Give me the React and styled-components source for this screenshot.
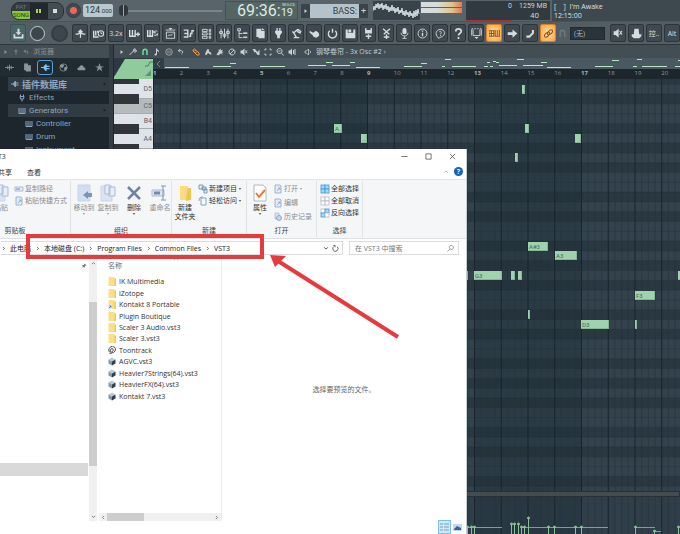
import React from "react";
import styled, { createGlobalStyle, css } from "styled-components";

const GlobalStyle = createGlobalStyle`
	* {
		box-sizing: border-box;
	}
	body {
		margin: 0;
		background: #2f3d46;
		font-family: "Open Sans", "Noto Sans CJK SC", sans-serif;
		font-size: 7px;
	}
	button, input, select {
		font: inherit;
		color: inherit;
		margin: 0;
		padding: 0;
		border: 0;
		background: none;
		appearance: none;
		outline: none;
	}
	a {
		color: inherit;
		text-decoration: none;
	}
	svg {
		display: block;
		flex: none;
	}
`;

//.... Icons, all drawn in a 16 x 16 box
const solid = { fill: "currentColor", stroke: "none" };
const ICONS = {
	download: (
		<>
			<path {...solid} d="M6.5 1h3v5H12L8 10.5 4 6h2.5z" />
			<path d="M2 9v5h12V9" strokeWidth="2.5" />
		</>
	),
	tee: <path d="M1 9c4 0 6-1 7-4 1 3 3 4 7 4M8 3v11M5 6l3-3 3 3" strokeWidth="1.8" />,
	keysClock: (
		<>
			<path d="M1 4v9h7M4 4v7M7 4v3" strokeWidth="2" />
			<circle cx="11.5" cy="8" r="4" strokeWidth="1.6" />
			<path d="M11.5 5.5V8h2" />
		</>
	),
	keysPlus: <path d="M1 3v9h8V3M5 3v8M10 9h6M13 6v6" strokeWidth="2" />,
	keysLoop: (
		<>
			<path d="M1 3v9h7V3M4.5 3v8" strokeWidth="2" />
			<path d="M10 10a3 3 0 0 0 5-2M15 5a3 3 0 0 0-5 2M10 4v3h3M15 11V8" strokeWidth="1.4" />
		</>
	),
	panel: (
		<>
			<path d="M1 3h14M2 6h12v9H2zM4 12c2-4 4 1 8-4" />
			<path {...solid} d="M5 0h6L8 3z" />
		</>
	),
	steps: <path d="M1 3h6v10H1M2 8h5M9 12h2V8h2V4h3" strokeWidth="2" />,
	racks: <path d="M2 2h7v3H2zM2 7h7v3H2zM2 12h7v3H2zM12 2h2v3h-2zM12 7h2v3h-2zM12 12h2v3h-2z" />,
	mixer: <path d="M3 1v14M8 1v14M13 1v14M1 5h4v3H1zM6 9h4v3H6zM11 5h4v3h-4z" />,
	tree: <path d="M1 1h4v3H1zM3 4v10h5M3 8h5M9 8h6M9 7h6M9 13h6M9 14h6" />,
	file: <path {...solid} d="M2 1h7v3h5v11H5v-2H2zM10 0l4 3h-4z" />,
	plug: <path {...solid} d="M3 4h2V0h2v4h2V0h2v4h2v3l-3 4v4H6v-4L3 7z" />,
	robot: <path d="M10 2L4 7l4 7M4 7L2 5M10 2l4 3-1 3M4 14h8M9 5l4 2" strokeWidth="2" />,
	hand: <path {...solid} d="M1 4l5 3 4-3 4 3 1 4-4 3-4-1-2-3-4-3z" />,
	power: <path d="M8 1v6M4 4a6 6 0 1 0 8 0" strokeWidth="2" />,
	save: <path {...solid} d="M1 2h3v5h8V2h3v13H1zM5 2h4v4H5z" />,
	savePlus: (
		<>
			<path {...solid} d="M3 0h2v3h6V0h2v8H3z" />
			<path d="M8 9v7M4 12h8" strokeWidth="2" />
		</>
	),
	cut: <path d="M3 1l9 8M13 1L4 9M8 9v7M4 13h8" strokeWidth="2" />,
	mic: (
		<>
			<rect {...solid} x="5" y="0" width="6" height="9" rx="3" />
			<path d="M3 7c0 6 10 6 10 0M8 12v3M5 15h6" />
		</>
	),
	info: (
		<>
			<circle cx="8" cy="8" r="6.5" />
			<path d="M8 7v5M8 3.5v2" strokeWidth="2" />
		</>
	),
	chat: (
		<>
			<path d="M4 13c-4-3-3-11 4-11s8 9 1 11l-4 2z" />
			<path d="M6 6c1-2 4-1 3 1l-1 2M8 10v1.5" />
		</>
	),
	help: <path d="M4 5c0-5 8-5 8 0 0 3-4 2-4 6M8 13v3" strokeWidth="2.5" />,
	frame: (
		<>
			<path d="M1 1h2M5 1h2M9 1h2M13 1h2M3 2v9h10V2M1 11V2M15 11V2" />
			<path {...solid} d="M5 13h6l-3 3z" />
		</>
	),
	keyboard: (
		<path d="M0 4h7v8H0zM0 8h7M3.5 4v8M9 3v9h6V3M12 3v8" strokeWidth="1.5" />
	),
	arrow: <path {...solid} d="M1 6h7V2l7 6-7 6v-4H1z" />,
	slide: <path {...solid} d="M2 11h4l4-4V3h3v5l-4 4-2 2H2z" />,
	link: (
		<path
			d="M7 10c-2-2 3-9 6-7s-2 7-4 6M9 6c2 2-3 9-6 7s2-7 4-6"
			strokeWidth="1.6"
		/>
	),
	magnet: <path d="M4 14V7c0-6 8-6 8 0v7" strokeWidth="3" />,
	mute: <path {...solid} d="M1 5h3l5-4v14l-5-4H1zM10 5l1-1 4 6-1 1zM14 4l1 1-4 6-1-1z" />,
	hat: <path {...solid} d="M5 1h6l1 8h3v3l-3 3H4l-3-3V9h3z" />,
	play: <path {...solid} d="M4 3l7 5-7 5z" />,
	wrench: <path d="M1 14l8-8M9 6c-1-4 2-5 4-4l-2 2 1 2 3-1c0 4-4 4-6 2" strokeWidth="2" />,
	note: <path {...solid} d="M6 1h2c0 3 4 3 4 6l-1 2c0-2-2-3-3-3v6c0 4-6 4-5 1 0-1 1-2 3-2z" />,
	circleNote: (
		<>
			<circle cx="8" cy="8" r="6.5" />
			<path d="M6 5v6M10 5v6" />
		</>
	),
	undo: <path d="M3 6h7c4 0 4 6 0 8M7 2L3 6l4 4" strokeWidth="2" />,
	up: <path d="M8 15V3M4 7l4-5 4 5" strokeWidth="2" />,
	pencil: <path d="M2 4l3-2 9 8v4h-4L2 6zM4 7l3-3M7 10l3-3" strokeWidth="2" />,
	brush: <path {...solid} d="M2 12l4-9 3-1 2 6 3 1 1 5-4-2-3-2-4 5z" />,
	spray: <path {...solid} d="M1 13l5-7-2-3 3 1 2-3 1 4 4-2-2 4 3 2-4 1 3 4-5-3-4 4z" />,
	ban: <path d="M8 2a6 6 0 1 0 .1 0M4 12l8-8" strokeWidth="2" />,
	slice: <path {...solid} d="M1 2h5l5 6 4-5v11h-4L7 8 5 9z" />,
	select: <path d="M5 2H2v3M11 2h3v3M5 14H2v-3M11 14h3v-3" strokeWidth="2" />,
	zoom: <path d="M7 1a5 5 0 1 0 .1 0M11 10l4 5M5 6h4" strokeWidth="2" />,
	speaker: <path {...solid} d="M1 5h3l4-4v14l-4-4H1zM10 4h2v8h-2zM13 2h2v12h-2z" />,
	speakerLine: <path d="M2 6h3l4-4v12l-4-4H2zM11 5l3 3-3 3" strokeWidth="1.5" />,
	wave: <path d="M0 8h16M5 5v6M8 3v10M11 5v6" strokeWidth="1.5" />,
	docs: <path {...solid} d="M2 1h7v3h5v11H5v-2H2z" />,
	plugLeft: <path {...solid} d="M0 7h4l4-5h2v3h5v2h-5v2h5v2h-5v3H8L4 9H0z" />,
	globe: (
		<>
			<circle cx="8" cy="8" r="6.5" />
			<path {...solid} d="M3 3l5-1 1 3-3 4-4-2zM10 7l4-1v4l-4 4-1-4z" />
		</>
	),
	cloud: <path {...solid} d="M2 13c-3-3 0-6 2-5 1-6 8-5 8 0 3 0 4 3 2 5z" />,
	star: <path {...solid} d="M8 0l2 6h6l-5 3 2 6-5-4-5 4 2-6-5-3h6z" />,
	effect: <path d="M5 1v3M11 1v3M4 5h8l-1 5H5zM8 10v5" strokeWidth="2" />,
	keys: <path d="M2 2v11h12V2M6 2v10M10 2v10" strokeWidth="2" />,
	caretUp: <path d="M3 10l5-5 5 5" strokeWidth="2" />,
	caretDown: <path d="M3 6l5 5 5-5" strokeWidth="2" />,
	caretLeft: <path d="M10 3L5 8l5 5" strokeWidth="2" />,
	caretRight: <path d="M6 3l5 5-5 5" strokeWidth="2" />,
	drop: <path {...solid} d="M3 5h10l-5 6z" />,
	refresh: <path d="M12 4a6 6 0 1 1-7-1M3 1h4v4" strokeWidth="1.5" />,
	search: <path d="M10 1a4.5 4.5 0 1 0 .1 0M7 9l-6 6" strokeWidth="1.5" />,
	minimize: <path d="M1 8h14" strokeWidth="1.5" />,
	maximize: <path d="M2 2h12v12H2z" strokeWidth="1.5" />,
	close: <path d="M2 2l12 12M14 2L2 14" strokeWidth="1.5" />,
	pin: <path {...solid} d="M9 1l6 5-4 1-2 6-3-3-5 5 4-6-3-3 6-1z" />,
	toontrack: (
		<path d="M8 1C1 2 0 10 4 13M8 5c-4 1-5 7-1 7s5-7 1-7M9 1c8 1 7 9 2 12l-8 2" strokeWidth="1.8" />
	),
};

const Icon = ({ name, size = 8 }) => (
	<svg
		width={size}
		height={size}
		viewBox="0 0 16 16"
		fill="none"
		stroke="currentColor"
		strokeWidth="1.3"
		aria-hidden="true"
	>
		{ICONS[name]}
	</svg>
);

//.... Page
const Desktop = styled.div`
	position: relative;
	display: flex;
	flex-direction: column;
	height: 100vh;
	overflow: hidden;
	color: #c9d3d8;
`;

const TopBar = styled.header`
	display: flex;
	align-items: center;
	height: 22px;
	padding-left: 11px;
	background: #58636a;
	border-bottom: 1px solid #4a545b;
	font-family: Roboto, sans-serif;
`;

const Transport = styled.div`
	display: flex;
	width: 53px;
	height: 18px;
	border-radius: 8px;
	overflow: hidden;
	background: #333b41;
	border: 1px solid #2a3035;
`;

const ModeButton = styled.button`
	display: flex;
	flex-direction: column;
	width: 18px;
	font-size: 6px;
	line-height: 8px;
	text-align: center;
	color: #6b7780;
	> span:last-child {
		background: #8fc63a;
		color: #2a3a12;
	}
`;

const TransportButton = styled.button`
	flex: 1;
	display: flex;
	align-items: center;
	justify-content: center;
	gap: 1px;
	border-left: 1px solid #20262a;
	background: ${({ $active }) => ($active ? "#22292e" : "#444d53")};
	> i {
		width: ${({ $active }) => ($active ? 2 : 4)}px;
		height: 4px;
		background: ${({ $active }) => ($active ? "#a6d83c" : "#d5dde1")};
	}
`;

const RecordButton = styled.button`
	width: 15px;
	height: 15px;
	margin-left: 2px;
	border: 1px solid #333b41;
	border-radius: 50%;
	background: radial-gradient(circle, #f0635f 0 3px, #414a50 4px);
`;

const Tempo = styled.output`
	width: 30px;
	height: 13px;
	margin-left: 2px;
	padding-left: 2px;
	border-radius: 2px;
	background: #b9c8cf;
	color: #2c383e;
	font-size: 9px;
	line-height: 13px;
	white-space: nowrap;
	> small {
		font-size: 6px;
	}
`;

const PositionSlider = styled.input`
	width: 103px;
	height: 12px;
	margin-left: 6px;
	background: linear-gradient(#79868d, #79868d) center / 100% 2px no-repeat;
	&::-webkit-slider-thumb {
		appearance: none;
		width: 9px;
		height: 11px;
		border-radius: 4px;
		background: linear-gradient(90deg, #30373c 4px, #9ab35a 4px 5px, #30373c 5px);
	}
`;

const Clock = styled.div`
	display: flex;
	justify-content: flex-end;
	width: 73px;
	height: 19px;
	margin-left: 3px;
	padding-right: 2px;
	border: 1px solid #47524f;
	background: #546563;
	color: #dcebe5;
	font-size: 16px;
	line-height: 18px;
	white-space: nowrap;
	> div {
		display: flex;
		flex-direction: column;
		align-items: flex-end;
		font-size: 4px;
		line-height: 5px;
	}
	small {
		padding-right: 2px;
		font-size: 11px;
		line-height: 12px;
	}
`;

const Pattern = styled.div`
	display: flex;
	align-items: center;
	height: 14px;
	margin-left: 3px;
	> button {
		display: flex;
		align-items: center;
		justify-content: center;
		width: 9px;
		height: 14px;
		background: #39434a;
		font-size: 9px;
	}
	> output {
		width: 49px;
		height: 14px;
		padding-right: 2px;
		background: #b4c3cb;
		color: #34424a;
		font-size: 9px;
		line-height: 14px;
		text-align: right;
	}
`;

const Scope = styled.div`
	width: 47px;
	height: 19px;
	margin-left: 5px;
	background: #38424a;
	overflow: hidden;
`;

const Meter = styled.div`
	display: flex;
	flex-direction: column;
	gap: 1px;
	width: 41px;
	height: 17px;
	margin-left: 1px;
	> i {
		height: 5px;
		background: linear-gradient(90deg, #d8dcdc 40%, #e0c58c 75%, #e07a55);
	}
`;

const Stats = styled.dl`
	display: grid;
	grid-template-columns: 46px 1fr;
	width: 84px;
	height: 19px;
	margin: 0 0 0 4px;
	padding: 0 3px 0 0;
	background: #313a40;
	font-size: 7px;
	line-height: 10px;
	text-align: right;
	white-space: nowrap;
	> dd {
		margin: 0;
	}
	> dd:nth-child(3) {
		border-bottom: 1px solid #a0363a;
	}
	> dd:last-child {
		padding-right: 8px;
		font-size: 8px;
	}
`;

const HintPanel = styled.div`
	flex: 1;
	height: 21px;
	margin-left: 2px;
	padding: 2px 2px 1px;
	background: #3e484f;
	font-family: "Open Sans", sans-serif;
	font-size: 7px;
	line-height: 9px;
	white-space: pre;
	color: #dbe3e7;
`;

const ToolBar = styled.nav`
	display: flex;
	align-items: center;
	gap: 2px;
	height: 23px;
	padding-left: 10px;
	background: #525d64;
	border-bottom: 1px solid #2e363b;
	color: #6c777d;
`;

const ToolButton = styled.button`
	display: flex;
	align-items: center;
	justify-content: center;
	flex: none;
	width: 16px;
	height: 18px;
	border: 1px solid #2d353a;
	border-radius: 2px;
	background: #3f494f;
	color: #d3dce1;
	font-size: 7px;
	${({ $tone }) =>
		$tone === "lit" &&
		css`
			background: #4c6668;
			border-color: #3d5355;
		`}
	${({ $tone }) =>
		$tone === "hot" &&
		css`
			background: radial-gradient(#ffe6b0, #f6a13c);
			border-color: #e07f1e;
			color: #a24f10;
		`}
`;

const Knob = styled.div`
	flex: none;
	width: ${({ $size }) => $size}px;
	height: ${({ $size }) => $size}px;
	margin: 0 2px;
	border-radius: 50%;
	background: #3c464c;
	border: ${({ $ring }) => ($ring ? "1px solid #c3ced4" : "2px solid #343d43")};
`;

const SnapSelect = styled.select`
	width: 35px;
	height: 13px;
	margin: 0 3px 0 1px;
	padding-left: 3px;
	background: #2b343a;
	border: 1px solid #222a2f;
	color: #aebac0;
`;

const Workspace = styled.main`
	flex: 1;
	display: flex;
	min-height: 0;
`;

//.... Browser
const Browser = styled.aside`
	width: 113px;
	border-right: 4px solid #343d43;
	background: #1d262c;
	color: #8fa3b3;
`;

const PanelHeader = styled.div`
	display: flex;
	align-items: center;
	gap: 4px;
	height: 13px;
	padding-left: ${({ $pad }) => $pad}px;
	background: #434d54;
	color: ${({ $dim }) => ($dim ? "#8a959b" : "#c5cfd4")};
	font-size: 7px;
	line-height: 12px;
	white-space: nowrap;
`;

const Tabs = styled.div`
	display: flex;
	align-items: center;
	gap: 2px;
	height: 18px;
	padding: 0 1px;
	background: #212b32;
`;

const TabButton = styled.button`
	display: flex;
	align-items: center;
	justify-content: center;
	width: 16px;
	height: 15px;
	border: 1px solid ${({ $on }) => ($on ? "#5aa0d8" : "transparent")};
	border-radius: 3px;
	color: ${({ $on }) => ($on ? "#7cc0f5" : "#8b969c")};
`;

const BrowserTree = styled.ul`
	list-style: none;
	margin: 0;
	padding: 1px 0 0 8px;
`;

const TreeRow = styled.li`
	display: flex;
	align-items: center;
	gap: 3px;
	height: ${({ $level }) => ($level ? 13 : 14)}px;
	padding-left: ${({ $level }) => 3 + $level * 7}px;
	background: ${({ $head }) => ($head ? "#313b43" : "none")};
	font-family: Roboto, "Noto Sans CJK SC", sans-serif;
	font-size: ${({ $level }) => ($level ? 8 : 9)}px;
	font-weight: ${({ $level }) => ($level ? 400 : 700)};
	color: #8ea5c0;
	white-space: nowrap;
	> svg ~ svg {
		margin: 0 2px 0 auto;
		color: #161d22;
	}
`;

//.... Piano roll
const PianoRoll = styled.section`
	flex: 1;
	display: flex;
	flex-direction: column;
	min-width: 0;
	border-left: 1px solid #20282d;
	background: #2c3942;
`;

const RollHead = styled.div`
	display: flex;
	height: 21px;
`;

const Overview = styled.div`
	flex: 1;
	display: flex;
	flex-direction: column;
	min-width: 0;
	overflow: hidden;
	background: #4a5961;
`;

const Ruler = styled.ol`
	display: flex;
	list-style: none;
	height: 10px;
	margin: 0;
	padding: 0;
	background: #1c262c;
	color: #8b999f;
	font-size: 6px;
	line-height: 8px;
	> li {
		flex: 0 0 26.75px;
	}
	> li:nth-child(4n + 1) {
		font-weight: 700;
		color: #a9b6bc;
	}
`;

const RollBody = styled.div`
	flex: 1;
	display: flex;
	min-height: 0;
	overflow: hidden;
`;

const Keys = styled.div`
	width: 39px;
	overflow: hidden;
`;

const WhiteKey = styled.div`
	position: relative;
	height: ${({ $tall }) => ($tall ? 20 : 15)}px;
	padding-right: 1px;
	background: ${({ $c }) => ($c ? "#b5babd" : "#dfe2e8")};
	border-bottom: 1px solid #a5abb1;
	color: #5c646b;
	font-family: Roboto, sans-serif;
	font-size: 7px;
	line-height: ${({ $tall }) => ($tall ? 20 : 15)}px;
	text-align: right;
	&::before {
		content: "";
		position: absolute;
		left: 0;
		top: -5px;
		width: 25px;
		height: 10px;
		background: #30353a;
		display: ${({ $sharp }) => ($sharp ? "block" : "none")};
	}
`;

const Canvas = styled.div`
	position: relative;
	flex: 1;
	overflow: hidden;
	background: #33424c;
	> svg {
		position: absolute;
		inset: 0;
	}
`;

const Note = styled.span`
	position: absolute;
	height: 9px;
	padding-left: 1px;
	overflow: hidden;
	background: #9fd2ad;
	border: 1px solid #86b795;
	border-width: 0 1px 1px 0;
	color: #3f6b50;
	font-family: Roboto, sans-serif;
	font-size: 6px;
	line-height: 9px;
`;

const Splitter = styled.div`
	height: 6px;
	background: #444c50;
	border: 1px solid #273036;
`;

const Velocity = styled.div`
	position: relative;
	height: 37px;
	margin-left: 39px;
	overflow: hidden;
	background: #2f3e48;
	> svg:last-child {
		position: absolute;
		left: 0;
		top: 0;
	}
`;

//.... Explorer window
const Explorer = styled.section`
	position: absolute;
	left: -40px;
	top: 149px;
	bottom: 0;
	width: 507px;
	display: flex;
	flex-direction: column;
	background: #fff;
	border-right: 1px solid #c6cdd1;
	color: #333;
	white-space: nowrap;
`;

const TitleBar = styled.div`
	display: flex;
	align-items: center;
	height: 15px;
	padding: 0 10px 0 30px;
	gap: 17px;
	> span {
		flex: 1;
	}
`;

const MenuTabs = styled.div`
	display: flex;
	align-items: center;
	gap: 15px;
	height: 15px;
	padding: 0 3px 0 38px;
	> a:nth-of-type(2) {
		margin-right: auto;
	}
	> svg {
		color: #999;
	}
`;

const HelpBadge = styled.button`
	width: 9px;
	height: 9px;
	margin-left: -10px;
	border-radius: 50%;
	background: #0f64b8;
	color: #fff;
	font-weight: 700;
	line-height: 9px;
	text-align: center;
`;

const Ribbon = styled.div`
	display: flex;
	height: 60px;
	background: #f5f6f7;
	border-top: 1px solid #e3e4e6;
	border-bottom: 1px solid #dfe0e2;
	color: #444;
`;

const Group = styled.div`
	display: flex;
	flex-direction: column;
	width: ${({ $width }) => $width}px;
	margin: 1px 0;
	border-right: 1px solid #e2e3e5;
	> footer {
		height: 12px;
		line-height: 12px;
		text-align: center;
	}
`;

const GroupBody = styled.div`
	flex: 1;
	display: flex;
	padding: 3px 0 0 ${({ $pad }) => $pad || 0}px;
	gap: 2px;
`;

const BigButton = styled.button`
	display: flex;
	flex-direction: column;
	align-items: center;
	width: ${({ $width }) => $width || 22}px;
	color: ${({ disabled }) => (disabled ? "#8a8d92" : "#333")};
	line-height: 9px;
	> span {
		margin-top: 1px;
	}
`;

const SmallList = styled.div`
	display: flex;
	flex-direction: column;
	gap: ${({ $gap }) => $gap || 2}px;
`;

const SmallButton = styled.button`
	display: flex;
	align-items: center;
	gap: 1px;
	height: 10px;
	line-height: 10px;
	color: ${({ disabled }) => (disabled ? "#8a8d92" : "#333")};
`;

const AddressRow = styled.div`
	display: flex;
	align-items: center;
	gap: 6px;
	height: 18px;
	padding: 0 7px 0 41px;
`;

const Crumbs = styled.nav`
	flex: 1;
	display: flex;
	align-items: center;
	height: 14px;
	border: 1px solid #dcdcdc;
	border-left: 0;
	color: #222;
	> a {
		display: flex;
		align-items: center;
		gap: 4px;
		margin-right: 4px;
	}
	> button {
		margin-right: 3px;
	}
	> a:last-of-type {
		margin-right: auto;
	}
`;

const SearchBox = styled.label`
	display: flex;
	align-items: center;
	width: 110px;
	height: 14px;
	padding: 0 4px 0 5px;
	border: 1px solid #dcdcdc;
	color: #666;
	> input {
		flex: 1;
		min-width: 0;
	}
	> input::placeholder {
		color: #777;
	}
`;

const Panes = styled.div`
	flex: 1;
	display: flex;
	min-height: 0;
	padding-top: 2px;
`;

const NavPane = styled.div`
	display: flex;
	justify-content: space-between;
	width: 137px;
	height: 262px;
	color: #777;
`;

const NavList = styled.div`
	flex: 1;
	display: flex;
	flex-direction: column;
	align-items: flex-end;
	justify-content: space-between;
	padding: 4px 1px 45px 0;
	> i {
		width: 100%;
		height: 13px;
		background: #d9d9d9;
	}
	> svg {
		margin-right: 1px;
	}
`;

const ScrollBar = styled.div`
	display: flex;
	flex-direction: ${({ $row }) => ($row ? "row" : "column")};
	align-items: center;
	flex: none;
	${({ $row }) => ($row ? "height: 8px; padding: 0 2px;" : "width: 8px; padding: 2px 0;")}
	background: #f0f0f0;
	color: #444;
	> i {
		${({ $row }) =>
			$row
				? "width: 37px; height: 8px; margin: 0 auto 0 1px;"
				: "width: 8px; height: 164px; margin: 36px 0 auto;"}
		background: #cdcdcd;
	}
`;

const FilePane = styled.div`
	display: flex;
	flex-direction: column;
	justify-content: space-between;
	width: 125px;
	height: 262px;
	padding-left: 2px;
	border-right: 1px solid #ededed;
`;

const FileTable = styled.table`
	border-collapse: collapse;
	th {
		position: relative;
		height: 17px;
		padding: 0 0 6px 9px;
		color: #5d6b7e;
		font-weight: 400;
		text-align: left;
	}
	th > svg {
		position: absolute;
		left: 74px;
		top: -3px;
		color: #999;
	}
	tbody {
		height: 126px;
	}
	td {
		height: 11px;
		padding: 0 0 0 9px;
		line-height: 9px;
	}
	td > a {
		display: flex;
		align-items: center;
		gap: 3px;
	}
`;

const Preview = styled.div`
	flex: 1;
	display: flex;
	flex-direction: column;
	align-items: center;
	color: #666;
	> p {
		margin: 126px 0 auto;
		line-height: 10px;
	}
`;

const ViewSwitch = styled.div`
	align-self: flex-end;
	display: flex;
	align-items: center;
	padding-right: 2px;
	> button {
		padding: 1px;
		border: 1px solid transparent;
	}
	> button:first-child {
		background: #cde8f7;
		border-color: #7cc0e8;
	}
`;

//.... Marks over the window
const Frame = styled.div`
	position: absolute;
	left: 26px;
	top: 234px;
	width: 238px;
	height: 25px;
	border: 4px solid #e53b3e;
	pointer-events: none;
`;

const Pointer = styled.svg`
	position: absolute;
	left: 269px;
	top: 254px;
	pointer-events: none;
`;

const BAR = 26.75;
const ROW = 9.8;
const BARS = 60;
const SHARPS = [0, 2, 5, 7, 9];

const GridLines = ({ rows }) => (
	<svg width={BAR * BARS} height="900">
		{rows &&
			Array.from({ length: 84 }, (_, i) => (
				<g key={i}>
					{SHARPS.includes(i % 12) && (
						<rect x="0" y={i * ROW - 4.5} width="100%" height={ROW} fill="#293841" />
					)}
					<path d={`M0 ${i * ROW - 4.5}H${BAR * BARS}`} stroke="#27343d" strokeWidth="0.5" />
				</g>
			))}
		{Array.from({ length: BARS / 8 }, (_, i) => (
			<rect key={i} x={(i * 8 + 4) * BAR} width={4 * BAR} height="900" fill="#14242e" opacity="0.22" />
		))}
		{Array.from({ length: BARS * 4 }, (_, i) => (
			<path
				key={i}
				d={`M${(i * BAR) / 4 + 0.5} 0V900`}
				stroke={i % 4 ? "#26343d" : "#18242c"}
				strokeWidth={i % 4 ? 0.6 : 1}
			/>
		))}
	</svg>
);

// x and width in pixels from bar 1, row counted down from D#5
const NOTES = [
	[369, 1, 3],
	[181, 5, 8, "A.."],
	[372, 5, 4],
	[208, 6, 6, ".."],
	[422, 6, 6],
	[362, 8, 3],
	[375, 17, 20, "A#3"],
	[402, 18, 22, "A3"],
	[312, 20, 3],
	[321, 20, 28, "G3"],
	[358, 20, 4],
	[365, 20, 4],
	[525, 20, 20],
	[482, 22, 20, "F3"],
	[375, 24, 2],
	[428, 25, 28, "D3"],
	[482, 25, 2],
];

const OVERVIEW = [
	[9, 9, 24], [57, 8, 18], [74, 5, 6], [104, 8, 25], [152, 7, 18], [170, 4, 7], [176, 7, 18],
	[194, 4, 5], [200, 9, 24], [248, 8, 18], [265, 5, 6], [286, 8, 3], [289, 1, 6], [296, 8, 24],
	[328, 8, 4], [331, 4, 3], [334, 8, 3], [337, 3, 3], [340, 4, 3], [343, 7, 18], [361, 1, 7],
	[367, 7, 20], [385, 4, 6], [391, 9, 24], [439, 8, 18], [456, 2, 7], [477, 8, 4], [481, 1, 5],
	[486, 8, 25], [519, 8, 8], [522, 2, 5],
];

const STEMS = [
	[314, 30], [318, 30], [321, 30], [358, 27], [361, 27], [365, 27], [368, 30], [371, 30],
	[375, 21], [395, 30], [401, 30], [422, 30], [428, 30], [482, 30], [501, 34], [525, 30],
];

const SCOPE = [
	10, 5, 9, 3, 7, 2, 8, 3, 7, 2, 9, 4, 8, 3, 9, 5, 11, 6, 10, 4, 10, 6, 12, 7, 11, 6, 13, 9, 12, 7,
	14, 10, 15, 9, 14, 11, 16, 10, 15, 12, 17, 10, 16, 9, 15, 8, 13,
];

const TOOLS = [
	"tee", "keysClock", "3.2x", "keysPlus", "keysLoop", "panel", "steps", "racks", "mixer", "tree",
	"file", "plug", "robot", "hand", "power", "save", "savePlus", "cut", "mic", "info", "chat",
	"help", "frame", "keyboard", "arrow", "slide", "link",
];

const ROLL_TOOLS = ["brush", "spray", "ban", "mute", "slice", "select", "zoom", "speaker"];

const FILES = [
	["folder", "IK Multimedia"],
	["folder", "iZotope"],
	["shortcut", "Kontakt 8 Portable"],
	["folder", "Plugin Boutique"],
	["folder", "Scaler 3 Audio.vst3"],
	["folder", "Scaler 3.vst3"],
	["toontrack", "Toontrack"],
	["cube", "AGVC.vst3"],
	["cube", "Heavier7Strings(64).vst3"],
	["cube", "HeavierFX(64).vst3"],
	["cube", "Kontakt 7.vst3"],
];

const FileIcon = ({ kind }) => {
	if (kind === "toontrack") return <Icon name="toontrack" size={8} />;
	return (
		<svg width="8" height="9" viewBox="0 0 16 18">
			{kind === "cube" ? (
				<>
					<path d="M8 1l7 4-7 4-7-4z" fill="#b9cbd6" />
					<path d="M1 5l7 4v8l-7-4z" fill="#7f98a8" />
					<path d="M15 5L8 9v8l7-4z" fill="#2c3f50" />
				</>
			) : (
				<>
					<path d="M1 0h12v3h3v15H1z" fill="#fbdf88" />
					<path d="M13 3h3v15h-3z" fill="#f0c860" />
				</>
			)}
			{kind === "shortcut" && (
				<>
					<path d="M0 9h8v9H0z" fill="#dfe9f5" />
					<path d="M2 16l4-4M3 12h3v3" stroke="#2f65a8" strokeWidth="1.5" fill="none" />
				</>
			)}
		</svg>
	);
};

const RibbonArt = ({ kind }) => (
	<svg width="18" height="18" viewBox="0 0 18 18" fill="none">
		{kind === "move" && (
			<>
				<path d="M3 1h12v16H3z" fill="#d3dff0" stroke="#c6d4e8" />
				<path d="M8 11l5-4v2h4v4h-4v2z" fill="#7d93b8" />
			</>
		)}
		{kind === "copy" && (
			<>
				<path d="M2 2h11v15H2z" fill="#d9e3f1" stroke="#c9d6e8" />
				<path d="M6 1h5v9H6zM10 3h6v9h-6z" fill="#e8eef7" stroke="#a9bad4" />
			</>
		)}
		{kind === "delete" && (
			<path d="M3 3l12 12M15 3L3 15" stroke="#6f83aa" strokeWidth="2.5" />
		)}
		{kind === "rename" && (
			<>
				<path d="M1 6h12v6H1z" fill="#dbe5f2" stroke="#a9bbd6" />
				<path d="M3 9h6" stroke="#7388b0" strokeWidth="3" />
				<path d="M10 2h5M12 2v14M10 16h5" stroke="#8094b8" />
			</>
		)}
		{kind === "folder" && (
			<>
				<path d="M4 2h8v2h3v12H4z" fill="#fbdc82" />
				<path d="M12 4h3v12l-5 1v-5z" fill="#efc558" />
			</>
		)}
		{kind === "properties" && (
			<>
				<path d="M3 1h9l3 3v13H3z" fill="#fff" stroke="#b4b7bc" />
				<path d="M5 9l3 4 6-7" stroke="#ec7a35" strokeWidth="2" />
			</>
		)}
	</svg>
);

const TinyArt = ({ kind }) => (
	<svg width="10" height="10" viewBox="0 0 10 10" fill="none">
		{kind === "path" && (
			<>
				<path d="M1 3h8v4H1z" fill="#e6edf6" stroke="#a9b9cf" />
				<path d="M2 5h4" stroke="#7388b0" />
			</>
		)}
		{kind === "page" && (
			<path d="M2 1h5l1 1v7H2zM4 7l3-3M5 4h2v2" fill="#e1eaf5" stroke="#8fa6c8" strokeWidth="0.8" />
		)}
		{kind === "new" && (
			<path d="M1 1h4v4H1zM4 3h4v3H4zM6 5h3v4H6z" fill="#e1eef8" stroke="#5b8bb0" strokeWidth="0.8" />
		)}
		{kind === "access" && (
			<path d="M3 2h5v7H3zM1 5c0-3 1-4 4-4" fill="#f4f8fb" stroke="#6a92b3" strokeWidth="0.8" />
		)}
		{kind === "history" && (
			<>
				<path d="M2 1h4v6H2z" fill="#dfe8f3" stroke="#a7b9d2" strokeWidth="0.8" />
				<circle cx="6" cy="6" r="2.5" fill="#c7d6ea" stroke="#7f98bf" strokeWidth="0.8" />
			</>
		)}
		{["all", "none", "invert"].includes(kind) &&
			[[1, 1], [5, 1], [1, 5], [5, 5]].map(([x, y], i) => {
				const on = kind === "all" || (kind === "invert" && (i === 1 || i === 2));
				return (
					<rect
						key={i}
						x={x}
						y={y}
						width="4"
						height="4"
						fill={on ? "#a5d6f7" : "#fff"}
						stroke={on ? "#3f9de0" : "#b5bcc2"}
						strokeWidth="0.8"
					/>
				);
			})}
	</svg>
);

const Header = () => (
	<TopBar>
		<Transport>
			<ModeButton aria-label="Mode">
				<span>PAT</span>
				<span>SONG</span>
			</ModeButton>
			<TransportButton $active aria-label="Pause">
				<i />
				<i />
			</TransportButton>
			<TransportButton aria-label="Stop">
				<i />
			</TransportButton>
		</Transport>
		<RecordButton aria-label="Record" />
		<Tempo>
			124<small>.000</small>
		</Tempo>
		<PositionSlider type="range" defaultValue="0" aria-label="Song position" />
		<Clock>
			69:36:
			<div>
				M:S:CS
				<small>19</small>
			</div>
		</Clock>
		<Pattern>
			<button aria-label="Previous pattern">
				<Icon name="play" size={6} />
			</button>
			<output>BASS:</output>
			<button aria-label="Add pattern">+</button>
		</Pattern>
		<Scope>
			<svg width="47" height="19" fill="none" stroke="#d4dfe4">
				<polyline points={SCOPE.map((y, x) => `${x},${y}`).join(" ")} />
			</svg>
		</Scope>
		<Meter>
			<i />
			<i />
		</Meter>
		<Stats>
			<dd>0</dd>
			<dd>1259 MB</dd>
			<dd />
			<dd>40</dd>
		</Stats>
		<HintPanel>{"[    ]  I'm Awake\n12:15:00"}</HintPanel>
	</TopBar>
);

const MainTools = () => (
	<ToolBar>
		<ToolButton $tone="lit" aria-label="Render">
			<Icon name="download" size={11} />
		</ToolButton>
		<Knob $size={15} $ring />
		<Knob $size={17} />
		{TOOLS.map((name) => (
			<ToolButton
				key={name}
				aria-label={name}
				$tone={["keyboard", "link"].includes(name) ? "hot" : undefined}
			>
				{ICONS[name] ? <Icon name={name} size={11} /> : name}
			</ToolButton>
		))}
		<Icon name="magnet" size={9} />
		<SnapSelect aria-label="Snap">
			<option>(无)</option>
		</SnapSelect>
		<ToolButton aria-label="Mute">
			<Icon name="mute" size={10} />
		</ToolButton>
		<ToolButton aria-label="Metronome">
			<Icon name="hat" size={11} />
		</ToolButton>
		<ToolButton>控..</ToolButton>
		<ToolButton>Alt</ToolButton>
	</ToolBar>
);

const BrowserPanel = () => (
	<Browser>
		<PanelHeader $pad={3} $dim>
			<Icon name="play" size={6} />
			<Icon name="up" size={6} />
			<Icon name="undo" size={6} />
			浏览器
		</PanelHeader>
		<Tabs>
			{["wave", "docs", "plugLeft", "globe", "cloud", "star"].map((name) => (
				<TabButton key={name} $on={name === "plugLeft"} aria-label={name}>
					<Icon name={name} size={9} />
				</TabButton>
			))}
		</Tabs>
		<BrowserTree>
			<TreeRow $level={0} $head>
				<Icon name="plugLeft" size={8} />
				插件数据库
				<Icon name="drop" size={5} />
			</TreeRow>
			<TreeRow $level={1}>
				<Icon name="effect" size={8} />
				Effects
			</TreeRow>
			<TreeRow $level={1} $head>
				<Icon name="keys" size={8} />
				Generators
				<Icon name="drop" size={5} />
			</TreeRow>
			{["Controller", "Drum", "Instrument"].map((name) => (
				<TreeRow key={name} $level={2}>
					<Icon name="keys" size={8} />
					{name}
				</TreeRow>
			))}
		</BrowserTree>
	</Browser>
);

const Roll = () => (
	<PianoRoll>
		<PanelHeader $pad={5}>
			<Icon name="play" size={6} />
			<Icon name="wrench" />
			<span style={{ color: "#63e29a" }}>
				<Icon name="magnet" />
			</span>
			<Icon name="note" />
			<Icon name="circleNote" />
			<Icon name="undo" size={7} />
			<span style={{ color: "#eda04a", marginLeft: 4 }}>
				<Icon name="pencil" />
			</span>
			{ROLL_TOOLS.map((name) => (
				<Icon key={name} name={name} />
			))}
			<span />
			<Icon name="speakerLine" />
			钢琴卷帘 - 3x Osc #2 ›
		</PanelHeader>
		<RollHead>
			<svg width="39" height="21">
				<path d="M0 21V19L11 1H39V21z" fill="#8fcb9c" />
				<path d="M31 8h3l2-4h3" stroke="#4c7d5b" fill="none" />
				<path d="M31 18h6v-6z" fill="#5f9470" />
			</svg>
			<Overview>
				<svg width="900" height="11">
					<rect width="11" height="11" fill="#333d43" />
					<path d="M7 3L4 6l3 3" stroke="#77838a" fill="none" />
					{OVERVIEW.map(([x, y, w]) => (
						<rect key={`${x}-${y}`} x={x + 3} y={y} width={w} height="1" fill="#b5e6c2" />
					))}
				</svg>
				<Ruler>
					{Array.from({ length: 20 }, (_, i) => (
						<li key={i}>{i + 1}</li>
					))}
				</Ruler>
			</Overview>
		</RollHead>
		<RollBody>
			<Keys>
				<WhiteKey $tall $sharp>D5</WhiteKey>
				<WhiteKey $sharp $c>C5</WhiteKey>
				<WhiteKey>B4</WhiteKey>
				<WhiteKey $tall $sharp>A4</WhiteKey>
				<WhiteKey $sharp />
			</Keys>
			<Canvas>
				<GridLines rows />
				{NOTES.map(([x, row, w, label]) => (
					<Note
						key={`${x}-${row}`}
						style={{ left: x, top: Math.round(row * ROW - 4), width: w }}
					>
						{label}
					</Note>
				))}
			</Canvas>
		</RollBody>
		<Splitter />
		<Velocity>
			<GridLines />
			<svg width="900" height="37">
				<g stroke="#8cc09b" fill="#8cc09b">
					<path d="M313 30.5h36M368 30.5h87M482 30.5h20M501 34.5h7" strokeWidth="0.8" />
					{STEMS.map(([x, y]) => (
						<g key={x}>
							<path d={`M${x + 0.5} ${y}V37`} />
							<circle cx={x + 0.5} cy={y} r="1" />
						</g>
					))}
				</g>
			</svg>
		</Velocity>
	</PianoRoll>
);

const ExplorerRibbon = () => (
	<Ribbon>
		<Group $width={111}>
			<GroupBody $pad={30}>
				<BigButton disabled>
					<RibbonArt kind="copy" />
					<span>粘贴</span>
				</BigButton>
				<SmallList>
					<SmallButton disabled>
						<TinyArt kind="path" />
						复制路径
					</SmallButton>
					<SmallButton disabled>
						<TinyArt kind="page" />
						粘贴快捷方式
					</SmallButton>
				</SmallList>
			</GroupBody>
			<footer>剪贴板</footer>
		</Group>
		<Group $width={101}>
			<GroupBody $pad={2}>
				<BigButton disabled>
					<RibbonArt kind="move" />
					<span>移动到</span>
					<Icon name="drop" size={4} />
				</BigButton>
				<BigButton disabled>
					<RibbonArt kind="copy" />
					<span>复制到</span>
					<Icon name="drop" size={4} />
				</BigButton>
				<BigButton $width={26}>
					<RibbonArt kind="delete" />
					<span>删除</span>
					<Icon name="drop" size={4} />
				</BigButton>
				<BigButton disabled>
					<RibbonArt kind="rename" />
					<span>重命名</span>
				</BigButton>
			</GroupBody>
			<footer>组织</footer>
		</Group>
		<Group $width={75}>
			<GroupBody $pad={2}>
				<BigButton>
					<RibbonArt kind="folder" />
					<span>
						新建
						<br />
						文件夹
					</span>
				</BigButton>
				<SmallList>
					<SmallButton>
						<TinyArt kind="new" />
						新建项目
						<Icon name="drop" size={4} />
					</SmallButton>
					<SmallButton>
						<TinyArt kind="access" />
						轻松访问
						<Icon name="drop" size={4} />
					</SmallButton>
				</SmallList>
			</GroupBody>
			<footer>新建</footer>
		</Group>
		<Group $width={70}>
			<GroupBody $pad={2}>
				<BigButton>
					<RibbonArt kind="properties" />
					<span>属性</span>
					<Icon name="drop" size={4} />
				</BigButton>
				<SmallList $gap={4}>
					<SmallButton disabled>
						<TinyArt kind="page" />
						打开
						<Icon name="drop" size={4} />
					</SmallButton>
					<SmallButton disabled>
						<TinyArt kind="page" />
						编辑
					</SmallButton>
					<SmallButton disabled>
						<TinyArt kind="history" />
						历史记录
					</SmallButton>
				</SmallList>
			</GroupBody>
			<footer>打开</footer>
		</Group>
		<Group $width={46}>
			<GroupBody $pad={3}>
				<SmallList>
					<SmallButton>
						<TinyArt kind="all" />
						全部选择
					</SmallButton>
					<SmallButton>
						<TinyArt kind="none" />
						全部取消
					</SmallButton>
					<SmallButton>
						<TinyArt kind="invert" />
						反向选择
					</SmallButton>
				</SmallList>
			</GroupBody>
			<footer>选择</footer>
		</Group>
	</Ribbon>
);

const ExplorerWindow = () => (
	<Explorer>
		<TitleBar>
			<span>VST3</span>
			<button aria-label="Minimize">
				<Icon name="minimize" size={7} />
			</button>
			<button aria-label="Maximize">
				<Icon name="maximize" size={7} />
			</button>
			<button aria-label="Close">
				<Icon name="close" size={7} />
			</button>
		</TitleBar>
		<MenuTabs>
			<a href="#share">共享</a>
			<a href="#view">查看</a>
			<Icon name="caretUp" size={6} />
			<HelpBadge>?</HelpBadge>
		</MenuTabs>
		<ExplorerRibbon />
		<AddressRow>
			<Crumbs>
				{["此电脑", "本地磁盘 (C:)", "Program Files", "Common Files", "VST3"].map((name) => (
					<a key={name} href="#path">
						<Icon name="caretRight" size={5} />
						{name}
					</a>
				))}
				<button aria-label="History">
					<Icon name="caretDown" size={6} />
				</button>
				<button aria-label="Refresh">
					<Icon name="refresh" size={7} />
				</button>
			</Crumbs>
			<SearchBox>
				<input placeholder="在 VST3 中搜索" aria-label="Search" />
				<Icon name="search" size={7} />
			</SearchBox>
		</AddressRow>
		<Panes>
			<NavPane>
				<NavList>
					<Icon name="pin" size={6} />
					<i />
				</NavList>
				<ScrollBar>
					<Icon name="caretUp" size={5} />
					<i />
					<Icon name="caretDown" size={5} />
				</ScrollBar>
			</NavPane>
			<FilePane>
				<FileTable>
					<thead>
						<tr>
							<th>
								名称
								<Icon name="caretUp" size={6} />
							</th>
						</tr>
					</thead>
					<tbody>
						{FILES.map(([kind, name]) => (
							<tr key={name}>
								<td>
									<a href="#file">
										<FileIcon kind={kind} />
										{name}
									</a>
								</td>
							</tr>
						))}
					</tbody>
				</FileTable>
				<ScrollBar $row>
					<Icon name="caretLeft" size={5} />
					<i />
					<Icon name="caretRight" size={5} />
				</ScrollBar>
			</FilePane>
			<Preview>
				<p>选择要预览的文件。</p>
				<ViewSwitch>
					<button aria-label="Details">
						<svg width="9" height="10" stroke="#6d8ea5" strokeWidth="0.8">
							<path d="M0 2h3M4 2h5M0 5h3M4 5h5M0 8h3M4 8h5" />
						</svg>
					</button>
					<button aria-label="Thumbnails">
						<svg width="9" height="7">
							<rect width="9" height="7" fill="#c8d8ec" />
							<path d="M1 5l3-3 4 2v2H1z" fill="#3c5f94" />
						</svg>
					</button>
				</ViewSwitch>
			</Preview>
		</Panes>
	</Explorer>
);

const App = () => (
	<Desktop>
		<GlobalStyle />
		<Header />
		<MainTools />
		<Workspace>
			<BrowserPanel />
			<Roll />
		</Workspace>
		<ExplorerWindow />
		<Frame />
		<Pointer width="134" height="88">
			<path d="M9 7L129 83" stroke="#e53b3e" strokeWidth="4" />
			<path d="M1 1L17 2L6 13z" fill="#e53b3e" />
		</Pointer>
	</Desktop>
);

export default App;
